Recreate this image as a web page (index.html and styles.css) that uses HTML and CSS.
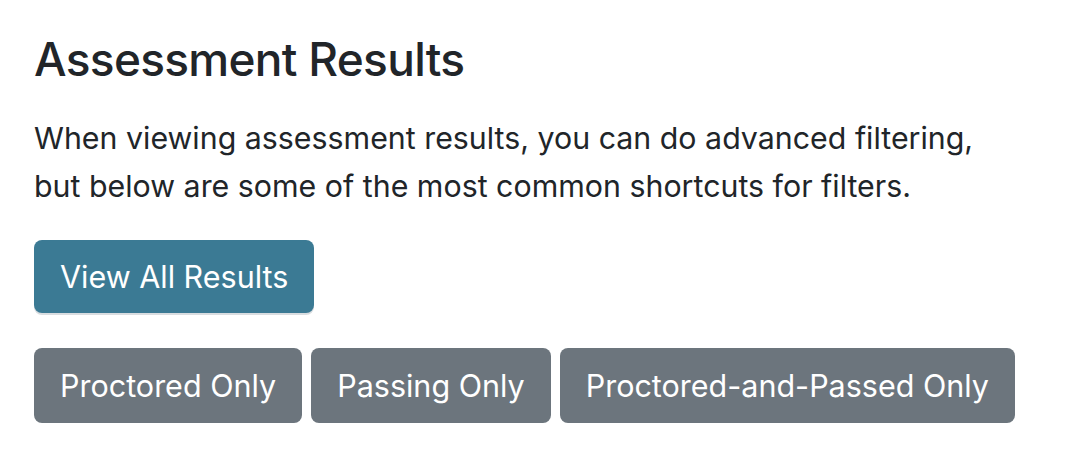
FILE: index.html
```html
<!DOCTYPE html>
<html>
<head>
<meta charset="utf-8">
<link rel="stylesheet" href="styles.css">
</head>
<body>
<main class="panel">
  <h2 class="title">Assessment Results</h2>
  <p class="lead">When viewing assessment results, you can do advanced filtering,<br>but below are some of the most common shortcuts for filters.</p>
  <div class="primary-row">
    <button class="btn btn-primary">View All Results</button>
  </div>
  <div class="filters">
    <button class="btn btn-secondary">Proctored Only</button>
    <button class="btn btn-secondary">Passing Only</button>
    <button class="btn btn-secondary">Proctored-and-Passed Only</button>
  </div>
</main>
</body>
</html>
```

FILE: styles.css
```css
html, body {
  margin: 0;
  padding: 0;
  background: #ffffff;
}
body {
  font-family: Inter, "Noto Sans", sans-serif;
  color: #212529;
}
.panel {
  padding: 30px 34px 0 34px;
}
.title {
  margin: 0 0 26px 0;
  font-size: 46px;
  font-weight: 500;
  line-height: 58px;
  letter-spacing: -0.7px;
}
.lead {
  margin: 0 0 30px 0;
  font-size: 30.35px;
  line-height: 48px;
  font-weight: 400;
}
.primary-row {
  display: flex;
}
.btn {
  font-family: Inter, "Noto Sans", sans-serif;
  border: none;
  border-radius: 8px;
  color: #ffffff;
  font-size: 30.5px;
  line-height: 44px;
  padding: 14px 26px;
  cursor: pointer;
}
.btn-primary {
  background: #3b7a94;
  height: 73px;
  box-shadow: 0 2px 0 #d9dde0;
}
.btn-secondary {
  background: #6c757d;
  height: 75px;
}
.filters {
  display: flex;
  gap: 9px;
  margin-top: 35px;
}
```
